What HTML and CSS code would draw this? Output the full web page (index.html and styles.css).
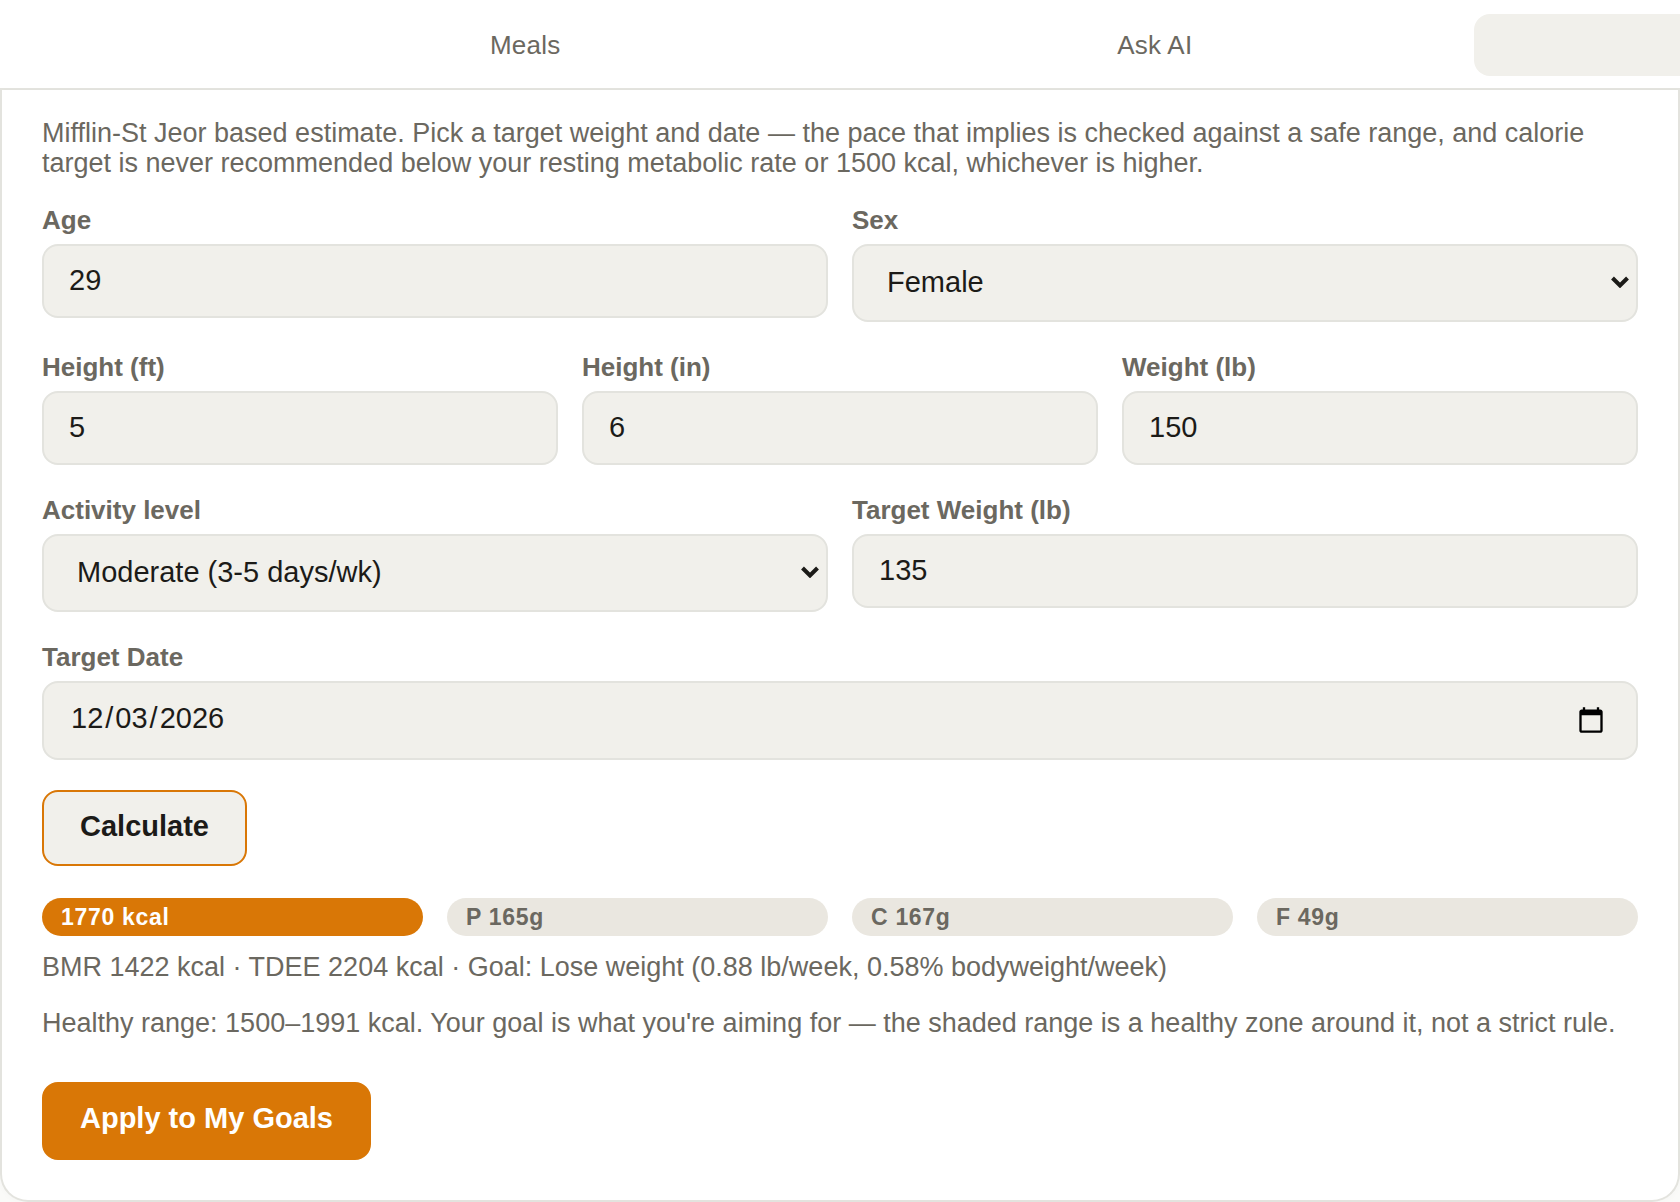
FILE: index.html
```
<!doctype html>
<html lang="en">
<head>
    <meta charset="UTF-8">
    <meta name="viewport" content="width=device-width, initial-scale=1">
    <title>Goal Calculator</title>
    <link rel="stylesheet" href="styles.css">
</head>
<body>
<nav class="tabs">
    <button type="button" class="tab" aria-label="Dashboard"></button>
    <button type="button" class="tab">Meals</button>
    <button type="button" class="tab">Ask AI</button>
    <button type="button" class="tab active" aria-label="Goals"></button>
</nav>
<main class="card">
    <p class="note intro">Mifflin-St Jeor based estimate. Pick a target weight and date — the pace that implies is checked against a safe range, and calorie target is never recommended below your resting metabolic rate or 1500 kcal, whichever is higher.</p>
    <form class="calc">
        <div class="row">
            <div class="field">
                <label for="age">Age</label>
                <input id="age" type="text" inputmode="numeric" value="29">
            </div>
            <div class="field">
                <label for="sex">Sex</label>
                <div class="select-wrap">
                    <select id="sex">
                        <option>Female</option>
                        <option>Male</option>
                    </select>
                    <svg class="chevron" viewBox="0 0 18 12" aria-hidden="true"><path d="M1.5 2 L9 9.5 L16.5 2"/></svg>
                </div>
            </div>
        </div>
        <div class="row">
            <div class="field">
                <label for="height-ft">Height (ft)</label>
                <input id="height-ft" type="text" inputmode="numeric" value="5">
            </div>
            <div class="field">
                <label for="height-in">Height (in)</label>
                <input id="height-in" type="text" inputmode="numeric" value="6">
            </div>
            <div class="field">
                <label for="weight">Weight (lb)</label>
                <input id="weight" type="text" inputmode="decimal" value="150">
            </div>
        </div>
        <div class="row">
            <div class="field">
                <label for="activity">Activity level</label>
                <div class="select-wrap">
                    <select id="activity">
                        <option>Moderate (3-5 days/wk)</option>
                    </select>
                    <svg class="chevron" viewBox="0 0 18 12" aria-hidden="true"><path d="M1.5 2 L9 9.5 L16.5 2"/></svg>
                </div>
            </div>
            <div class="field">
                <label for="target-weight">Target Weight (lb)</label>
                <input id="target-weight" type="text" inputmode="decimal" value="135">
            </div>
        </div>
        <div class="row">
            <div class="field">
                <label for="target-date">Target Date</label>
                <input id="target-date" type="date" value="2026-12-03">
            </div>
        </div>
        <button type="button" class="btn">Calculate</button>
    </form>
    <div class="row chips">
        <span class="chip primary">1770 kcal</span>
        <span class="chip">P 165g</span>
        <span class="chip">C 167g</span>
        <span class="chip">F 49g</span>
    </div>
    <p class="note">BMR 1422 kcal · TDEE 2204 kcal · Goal: Lose weight (0.88 lb/week, 0.58% bodyweight/week)</p>
    <p class="note">Healthy range: 1500–1991 kcal. Your goal is what you're aiming for — the shaded range is a healthy zone around it, not a strict rule.</p>
    <button type="button" class="btn apply">Apply to My Goals</button>
</main>
</body>
</html>
```
FILE: styles.css
```
* {
    box-sizing: border-box;
}
body {
    margin: 0;
    background: #fafaf8;
    color: #1c1b18;
    font-family: "Liberation Sans", Arial, sans-serif;
}
/* tab strip is wider than the screen, the side tabs run off the edges */
.tabs {
    display: flex;
    justify-content: center;
    gap: 8px;
    padding: 14px 0 12px;
    overflow: hidden;
    background: #fff;
    border-bottom: 2px solid #e3e3de;
}
.tab {
    flex: 0 0 37%;
    height: 62px;
    padding: 0;
    border: 0;
    border-radius: 16px;
    background: none;
    color: #6b6860;
    font: 26px "Liberation Sans", Arial, sans-serif;
    letter-spacing: 0.01em;
}
.tab.active {
    background: #f1f0eb;
}
.card {
    padding: 28px 40px 40px;
    background: #fff;
    border: 2px solid #e3e3de;
    border-top: 0;
    border-radius: 0 0 28px 28px;
    box-shadow: 0 2px 6px rgba(0, 0, 0, 0.02);
}
.note {
    margin: 0 0 26px;
    font-size: 27px;
    line-height: 30px;
    color: #6b6860;
}
.intro {
    margin-bottom: 27px;
}
.row {
    display: grid;
    grid-auto-flow: column;
    grid-auto-columns: 1fr;
    align-items: start;
    gap: 24px;
    margin-bottom: 30px;
}
.field label {
    display: block;
    margin-bottom: 9px;
    font-size: 26px;
    font-weight: bold;
    line-height: 30px;
    color: #6b6860;
}
input,
select {
    display: block;
    width: 100%;
    height: 74px;
    padding: 18px 25px 20px;
    border: 2px solid #e3e3de;
    border-radius: 16px;
    background: #f1f0eb;
    color: #1c1b18;
    font: 29px "Liberation Sans", Arial, sans-serif;
}
select {
    height: 78px;
    padding: 19px 33px 21px;
    appearance: none;
}
input[type="date"] {
    height: 79px;
    padding: 20px 28px 20px 25px;
}
::-webkit-datetime-edit {
    padding-bottom: 4px;
}
::-webkit-datetime-edit-month-field,
::-webkit-datetime-edit-day-field,
::-webkit-datetime-edit-year-field {
    padding: 0 2px;
}
::-webkit-calendar-picker-indicator {
    width: 30px;
    height: 30px;
}
.select-wrap {
    position: relative;
}
.chevron {
    position: absolute;
    top: 32px;
    right: 9px;
    width: 18px;
    height: 12px;
    fill: none;
    stroke: #1c1b18;
    stroke-width: 4;
    pointer-events: none;
}
.btn {
    display: block;
    height: 76px;
    padding: 0 36px 4px;
    border: 2px solid #d97706;
    border-radius: 16px;
    background: #f1f0eb;
    color: #1c1b18;
    font: bold 29px "Liberation Sans", Arial, sans-serif;
}
.btn.apply {
    height: 78px;
    margin-top: 44px;
    padding-bottom: 6px;
    background: #d97706;
    color: #fff;
}
.chips {
    margin: 32px 0 16px;
}
.chip {
    padding: 0 19px;
    border-radius: 19px;
    background: #eae7e0;
    color: #6b6860;
    font-size: 23px;
    font-weight: bold;
    line-height: 38px;
    letter-spacing: 0.03em;
}
.chip.primary {
    background: #d97706;
    color: #fff;
}
```
